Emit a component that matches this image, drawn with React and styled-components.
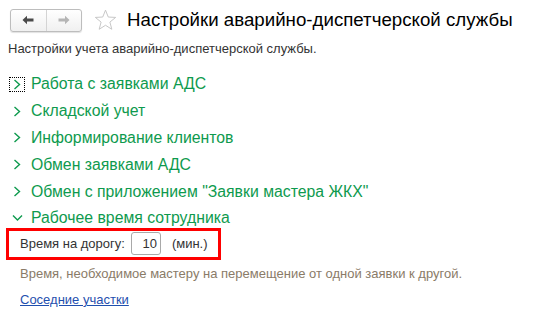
import React from "react";
import styled, { createGlobalStyle } from "styled-components";

const GlobalStyle = createGlobalStyle`
  body {
    margin: 0;
    background: #fff;
    font-family: "Liberation Sans", Arial, sans-serif;
  }
`;

const Page = styled.div`
  width: 558px;
  height: 330px;
  box-sizing: border-box;
  padding: 8px 0 0 0;
  overflow: hidden;
`;

const Header = styled.div`
  display: flex;
  align-items: center;
  height: 24px;
  padding-left: 10px;
`;

const NavGroup = styled.div`
  display: flex;
  width: 72px;
  height: 23px;
  box-sizing: border-box;
  border: 1px solid #bdbdbd;
  border-radius: 3px;
  background: linear-gradient(#ffffff, #f0f0f0);
  box-shadow: 0 1px 1px rgba(0, 0, 0, 0.12);
`;

const NavButton = styled.div`
  flex: 1;
  display: flex;
  align-items: center;
  justify-content: center;
  & + & {
    border-left: 1px solid #d4d4d4;
  }
`;

const Star = styled.div`
  margin-left: 12px;
  width: 24px;
  height: 24px;
  display: flex;
  align-items: center;
`;

const Title = styled.h1`
  margin: 0 0 0 9px;
  font-size: 18.7px;
  font-weight: normal;
  color: #000;
  line-height: 24px;
  white-space: nowrap;
`;

const Subtitle = styled.div`
  margin: 9px 0 0 8px;
  font-size: 13px;
  color: #333;
  line-height: 15px;
`;

const Groups = styled.div`
  margin-top: 15px;
  display: flex;
  flex-direction: column;
`;

const GroupRow = styled.div`
  display: flex;
  align-items: center;
  height: 26.8px;
  padding-left: 9px;
`;

const Chevron = styled.div`
  width: 16px;
  height: 15px;
  box-sizing: border-box;
  display: flex;
  align-items: center;
  justify-content: center;
  border: 1px dotted ${p => (p.$focused ? "#000" : "transparent")};
`;

const GroupTitle = styled.span`
  margin-left: 6px;
  font-size: 15.8px;
  color: #0e9a4e;
  white-space: nowrap;
`;

const Highlight = styled.div`
  margin: -4px 0 0 6px;
  width: 215px;
  height: 32px;
  box-sizing: border-box;
  border: 3px solid #ff0000;
  display: flex;
  align-items: center;
  padding-left: 11px;
  font-size: 13px;
  color: #333;
  white-space: nowrap;
`;

const Field = styled.div`
  margin-left: 6px;
  flex: none;
  width: 30px;
  height: 23px;
  box-sizing: border-box;
  border: 1px solid #a9a9a9;
  border-radius: 3px;
  display: flex;
  align-items: center;
  justify-content: flex-end;
  padding-right: 3px;
  font-size: 13px;
  color: #333;
`;

const Unit = styled.span`
  margin-left: 11px;
`;

const Hint = styled.div`
  margin: 6px 0 0 20px;
  font-size: 13px;
  color: #8a7b68;
  line-height: 15px;
  white-space: nowrap;
`;

const Link = styled.a`
  display: inline-block;
  margin: 11px 0 0 20px;
  font-size: 13px;
  color: #1f4fae;
  text-decoration: underline;
  line-height: 15px;
`;

const Right = () => (
  <svg width="10" height="11" viewBox="0 0 10 11">
    <path d="M2.5 1 L7.5 5.5 L2.5 10" fill="none" stroke="#0e9a4e" strokeWidth="1.4" />
  </svg>
);

const Down = () => (
  <svg width="11" height="8" viewBox="0 0 11 8">
    <path d="M1 1.5 L5.5 6 L10 1.5" fill="none" stroke="#0e9a4e" strokeWidth="1.4" />
  </svg>
);

const Arrow = ({ dir, color }) => (
  <svg width="12" height="10" viewBox="0 0 12 10">
    <g transform={dir === "right" ? "matrix(-1 0 0 1 12 0)" : undefined}>
      <path d="M0.5 5 L5 0.8 L5 3.6 L11.5 3.6 L11.5 6.4 L5 6.4 L5 9.2 Z" fill={color} />
    </g>
  </svg>
);

const groups = [
  { title: "Работа с заявками АДС", focused: true },
  { title: "Складской учет" },
  { title: "Информирование клиентов" },
  { title: "Обмен заявками АДС" },
  { title: "Обмен с приложением \"Заявки мастера ЖКХ\"" },
  { title: "Рабочее время сотрудника", open: true },
];

const App = () => (
  <Page>
    <GlobalStyle />
    <Header>
      <NavGroup>
        <NavButton>
          <Arrow dir="left" color="#4a4a4a" />
        </NavButton>
        <NavButton>
          <Arrow dir="right" color="#b5b5b5" />
        </NavButton>
      </NavGroup>
      <Star>
        <svg width="23" height="22" viewBox="0 0 24 23">
          <path
            d="M12 1.2 L14.9 8.4 L22.6 8.8 L16.6 13.7 L18.6 21.2 L12 17 L5.4 21.2 L7.4 13.7 L1.4 8.8 L9.1 8.4 Z"
            fill="none"
            stroke="#c4c4c4"
            strokeWidth="1"
            strokeLinejoin="round"
          />
        </svg>
      </Star>
      <Title>Настройки аварийно-диспетчерской службы</Title>
    </Header>
    <Subtitle>Настройки учета аварийно-диспетчерской службы.</Subtitle>
    <Groups>
      {groups.map(g => (
        <GroupRow key={g.title}>
          <Chevron $focused={g.focused}>{g.open ? <Down /> : <Right />}</Chevron>
          <GroupTitle>{g.title}</GroupTitle>
        </GroupRow>
      ))}
    </Groups>
    <Highlight>
      Время на дорогу:
      <Field>10</Field>
      <Unit>(мин.)</Unit>
    </Highlight>
    <Hint>Время, необходимое мастеру на перемещение от одной заявки к другой.</Hint>
    <Link href="#">Соседние участки</Link>
  </Page>
);

export default App;
